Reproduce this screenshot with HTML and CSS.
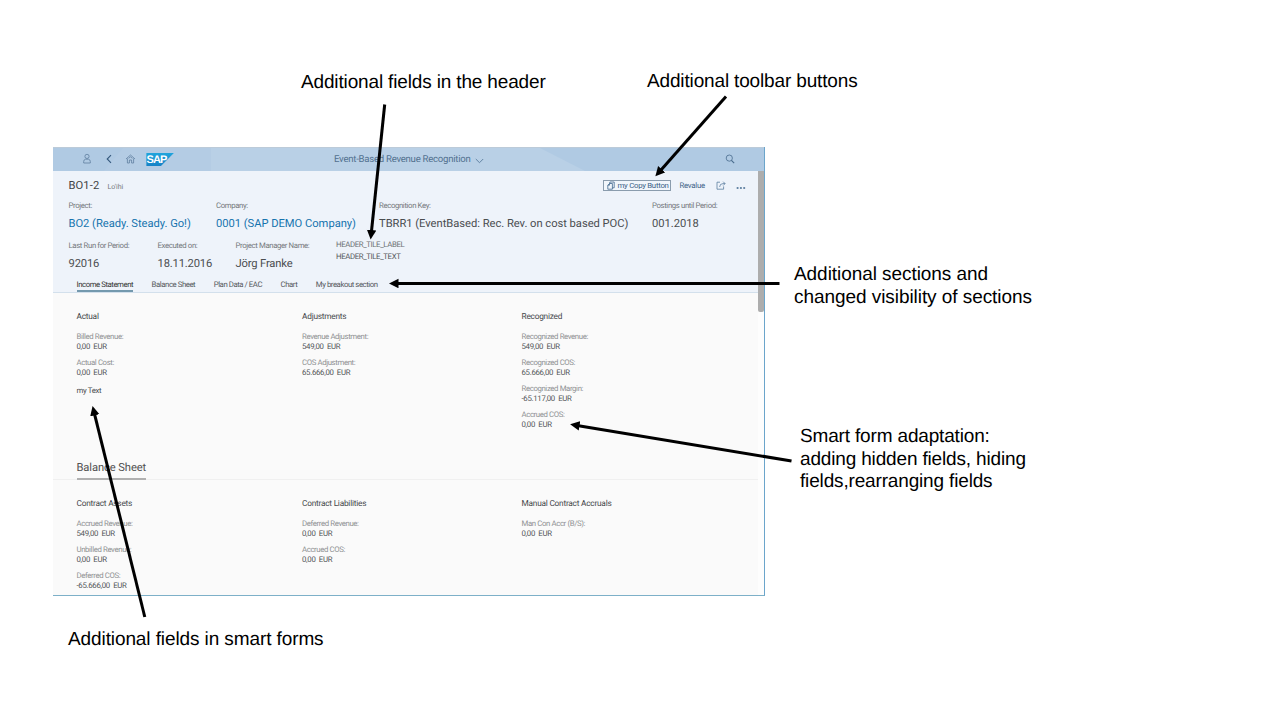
FILE: index.html
```html
<!DOCTYPE html>
<html lang="en">
<head>
<meta charset="utf-8">
<title>Event-Based Revenue Recognition</title>
<link rel="stylesheet" href="styles.css">
</head>
<body>
<main class="slide">
  <section class="app">
    <header class="shell">
      <svg class="shell-bg" width="712" height="24" viewBox="0 0 712 24"><path d="M70 0H470L534 24H50Z" fill="#b4cce4"/><path d="M158 0H487L534 24H158Z" fill="#b9d0e6"/></svg>
      <div class="shell-left">
        <svg width="10" height="12" viewBox="0 0 10 12" fill="none" stroke="#5f7f9f" stroke-width=".8"><circle cx="5" cy="3.4" r="2.1"/><path d="M1.7 10V8.4Q1.7 6.6 3.6 6.2H6.4Q8.3 6.6 8.3 8.4V10Z"/></svg>
        <svg width="10" height="12" viewBox="0 0 10 12" fill="none" stroke="#34597d" stroke-width="1.1"><path d="M7 2.2L3.2 6L7 9.8"/></svg>
        <svg width="11" height="12" viewBox="0 0 11 12" fill="none" stroke="#5f7f9f" stroke-width=".8"><path d="M1 6L5.5 2L10 6M2.4 5.6V10H4.4V7H6.6V10H8.6V5.6M3.6 5.4L5.5 3.8L7.4 5.4"/></svg>
        <div class="logo"><span>SAP</span></div>
      </div>
      <div class="shell-title"><span>Event-Based Revenue Recognition</span>
        <svg width="9" height="6" viewBox="0 0 9 6" fill="none" stroke="#587b9c" stroke-width=".9"><path d="M.8 1L4.5 4.7L8.2 1"/></svg>
      </div>
      <svg class="search" width="10" height="10" viewBox="0 0 10 10" fill="none" stroke="#486b8d" stroke-width=".8"><circle cx="4.3" cy="4.1" r="3.1"/><path d="M6.4 6.4L9.2 9.2" stroke-width="1.1"/></svg>
    </header>
    <div class="body">
      <div class="page">
        <div class="head">
          <div class="title-row">
            <h1>BO1-2</h1><span class="sub">Lo'ihi</span>
            <div class="tools">
              <button class="copy">
                <svg width="8" height="9" viewBox="0 0 8 9" fill="none" stroke="#41688e" stroke-width=".8"><path d="M2.8 1H7.2V6.8H5.4M2.8 1V2.5M.8 4.2L2.5 2.5H5.4V8.2H.8ZM.8 4.2H2.5V2.5"/></svg>
                <span>my Copy Button</span></button>
              <span class="revalue">Revalue</span>
              <svg class="share" width="10" height="9" viewBox="0 0 10 9" fill="none" stroke="#5c7e9f" stroke-width=".8"><path d="M4 1.2H1V8.2H7.6V5.4M3.6 6Q3.8 2.6 7 2.6H9M7.2 .7L9.1 2.6L7.2 4.5"/></svg>
              <svg class="more" width="10" height="4" viewBox="0 0 10 4" fill="#5c7e9f"><circle cx="1.6" cy="2" r="1.1"/><circle cx="4.9" cy="2" r="1.1"/><circle cx="8.2" cy="2" r="1.1"/></svg>
            </div>
          </div>
          <div class="facets facets-a">
            <div><label>Project:</label><a>BO2 (Ready. Steady. Go!)</a></div>
            <div><label>Company:</label><a>0001 (SAP DEMO Company)</a></div>
            <div><label>Recognition Key:</label><b>TBRR1 (EventBased: Rec. Rev. on cost based POC)</b></div>
            <div><label>Postings until Period:</label><b>001.2018</b></div>
          </div>
          <div class="facets facets-b">
            <div><label>Last Run for Period:</label><b>92016</b></div>
            <div><label>Executed on:</label><b>18.11.2016</b></div>
            <div><label>Project Manager Name:</label><b>Jörg Franke</b></div>
            <div class="tile"><span>HEADER_TILE_LABEL</span><span class="dark">HEADER_TILE_TEXT</span></div>
          </div>
          <nav class="tabs">
            <span class="on">Income Statement</span><span>Balance Sheet</span><span>Plan Data / EAC</span><span>Chart</span><span>My breakout section</span>
          </nav>
        </div>
        <div class="forms forms-a">
          <div class="col"><h3>Actual</h3>
            <dl><dt>Billed Revenue:</dt><dd>0,00&nbsp; EUR</dd></dl>
            <dl><dt>Actual Cost:</dt><dd>0,00&nbsp; EUR</dd></dl>
            <p>my Text</p></div>
          <div class="col"><h3>Adjustments</h3>
            <dl><dt>Revenue Adjustment:</dt><dd>549,00&nbsp; EUR</dd></dl>
            <dl><dt>COS Adjustment:</dt><dd>65.666,00&nbsp; EUR</dd></dl></div>
          <div class="col"><h3>Recognized</h3>
            <dl><dt>Recognized Revenue:</dt><dd>549,00&nbsp; EUR</dd></dl>
            <dl><dt>Recognized COS:</dt><dd>65.666,00&nbsp; EUR</dd></dl>
            <dl><dt>Recognized Margin:</dt><dd>-65.117,00&nbsp; EUR</dd></dl>
            <dl><dt>Accrued COS:</dt><dd>0,00&nbsp; EUR</dd></dl></div>
        </div>
        <div class="section"><h2>Balance Sheet</h2></div>
        <div class="forms forms-b">
          <div class="col"><h3>Contract Assets</h3>
            <dl><dt>Accrued Revenue:</dt><dd>549,00&nbsp; EUR</dd></dl>
            <dl><dt>Unbilled Revenue:</dt><dd>0,00&nbsp; EUR</dd></dl>
            <dl><dt>Deferred COS:</dt><dd>-65.666,00&nbsp; EUR</dd></dl></div>
          <div class="col"><h3>Contract Liabilities</h3>
            <dl><dt>Deferred Revenue:</dt><dd>0,00&nbsp; EUR</dd></dl>
            <dl><dt>Accrued COS:</dt><dd>0,00&nbsp; EUR</dd></dl></div>
          <div class="col"><h3>Manual Contract Accruals</h3>
            <dl><dt>Man Con Accr (B/S):</dt><dd>0,00&nbsp; EUR</dd></dl></div>
        </div>
      </div>
      <div class="scroll"><div class="thumb"></div></div>
    </div>
  </section>

  <svg class="arrows" width="1280" height="720" viewBox="0 0 1280 720">
    <defs><marker id="tip" markerUnits="userSpaceOnUse" markerWidth="10" markerHeight="10" refX="1" refY="4.75" orient="auto"><path d="M0 0L9.5 4.75L0 9.5Z"/></marker></defs>
    <g stroke="#000" stroke-width="3">
      <path d="M384.7 104.5L371.5 231" marker-end="url(#tip)"/>
      <path d="M726 96.5L661 170" marker-end="url(#tip)"/>
      <path d="M779.5 283.5H397.5" marker-end="url(#tip)"/>
      <path d="M791.5 461L578.5 425.7" marker-end="url(#tip)"/>
      <path d="M144.8 617L94.6 414.3" marker-end="url(#tip)"/>
    </g>
  </svg>
  <p class="note n1">Additional fields in the header</p>
  <p class="note n2">Additional toolbar buttons</p>
  <p class="note n3">Additional sections and<br>changed visibility of sections</p>
  <p class="note n4">Smart form adaptation:<br>adding hidden fields, hiding<br>fields,rearranging fields</p>
  <p class="note n5">Additional fields in smart forms</p>
</main>
</body>
</html>
```
FILE: styles.css
```css
* { box-sizing: border-box; margin: 0; padding: 0; }
body { background: #fff; }
svg { display: block; flex: none; }
.slide { position: relative; width: 1280px; height: 720px; padding: 147px 0 0 53px; overflow: hidden; font-family: Roboto, "Noto Sans", sans-serif; color: #4a4d50; white-space: nowrap; text-rendering: geometricPrecision; }
.app { width: 712px; height: 449px; border-right: 1px solid #6ba5cb; border-bottom: 1px solid #7db0c8; display: flex; flex-direction: column; }

.shell { position: relative; height: 24px; flex: none; background: #b0cae3; border-top: 1px solid #bccbd9; display: flex; align-items: center; overflow: hidden; }
.shell-bg { position: absolute; left: 0; top: 0; }
.shell-left { position: relative; width: 281px; padding-left: 29.4px; display: flex; align-items: center; gap: 12px; }
.shell-left svg { margin-bottom: 1px; }
.shell-left svg:nth-child(3) { margin-left: -1px; }
.logo { width: 27.5px; height: 13px; margin-left: -2px; background: linear-gradient(#1fa4dc, #1783c6); clip-path: polygon(0 0, 100% 0, 53% 100%, 0 100%); color: #fff; font: bold 11px/14px "Liberation Sans", Arial, sans-serif; letter-spacing: -.8px; }
.shell-title { position: relative; flex: 1; display: flex; align-items: center; gap: 5px; font-size: 9.6px; letter-spacing: -.26px; color: #52718f; }
.shell-title svg { margin-top: 3px; }
.search { position: relative; margin-right: 29.5px; margin-bottom: 1px; }

.body { flex: 1; display: flex; min-height: 0; }
.page { width: 705px; background: #fafafa; }
.scroll { flex: 1; background: #fdfdfd; }
.thumb { height: 141px; background: #adadad; border-radius: 0 0 2px 2px; }

.head { height: 122px; background: #eef3fa; border-bottom: 1px solid #d3e0ec; padding-left: 15.5px; display: flex; flex-direction: column; }
.title-row { height: 29px; flex: none; display: flex; align-items: center; }
h1 { font-size: 11.2px; font-weight: 400; color: #3f4245; width: 39px; letter-spacing: .1px; }
.sub { font-size: 7px; color: #74787c; padding-top: 3px; }
.tools { margin-left: auto; padding-right: 12.5px; display: flex; align-items: center; color: #3d6388; font-size: 7.8px; letter-spacing: -.27px; }
.copy { width: 68px; height: 11px; border: 1px solid #8a9cad; background: #f1f6fb; display: flex; align-items: center; gap: 3px; padding-left: 3px; font: inherit; letter-spacing: inherit; color: inherit; }
.revalue { margin-left: 9px; width: 36px; }
.share { margin-right: 10px; }
.more { margin-top: 5px; }

.facets { display: grid; flex: none; height: 39px; }
.facets label { display: block; height: 12px; line-height: 12px; font-size: 7.8px; letter-spacing: -.38px; color: #75797d; }
.facets a, .facets b { display: block; height: 24px; line-height: 24px; font-size: 11.2px; font-weight: 400; }
.facets a { color: #1673ae; }
.facets-a { grid-template-columns: 147.5px 163px 273px auto; letter-spacing: -.03px; }
.facets-b { grid-template-columns: 89px 78px 100.5px auto; padding-top: 1px; letter-spacing: -.16px; }
.tile { display: flex; flex-direction: column; font-size: 7.8px; letter-spacing: -.38px; line-height: 12px; color: #6c7074; margin-top: -1px; }
.tile .dark { color: #55595d; }
.tabs { height: 14px; flex: none; display: flex; padding-left: 8px; gap: 18.5px; font-size: 7.8px; letter-spacing: -.45px; line-height: 13px; color: #55595d; }
.tabs .on { color: #333; border-bottom: 2px solid #7499ae; }

.forms { display: grid; grid-template-columns: 225.5px 219.5px auto; padding-left: 23.5px; }
.forms-a { height: 163px; padding-top: 16px; }
.forms-b { padding-top: 16px; }
h3 { height: 16px; line-height: 16px; font-size: 8.3px; letter-spacing: -.23px; font-weight: 400; color: #46494c; margin-bottom: 7px; }
dl { margin-bottom: 6px; font-size: 7.8px; letter-spacing: -.38px; line-height: 10px; }
dt { color: #8f9193; }
dd { color: #505356; letter-spacing: -.3px; }
.col p { font-size: 7.8px; letter-spacing: -.35px; line-height: 12px; padding-top: 1px; }
.section { height: 24px; border-bottom: 1px solid #f0f0f0; padding-left: 23.5px; display: flex; }
h2 { font-size: 11.2px; letter-spacing: -.1px; line-height: 24px; font-weight: 400; color: #515151; border-bottom: 2px solid #b0b0b0; height: 24px; }

.arrows { position: absolute; left: 0; top: 0; }
.note { position: absolute; font: 19px/23px "Liberation Sans", Arial, sans-serif; letter-spacing: -.12px; color: #000; }
.n1 { left: 301px; top: 71px; letter-spacing: -.15px; }
.n2 { left: 647px; top: 70px; letter-spacing: -.15px; }
.n3 { left: 794px; top: 263px; letter-spacing: -.06px; }
.n4 { left: 800px; top: 426px; line-height: 22.7px; letter-spacing: -.16px; }
.n5 { left: 68px; top: 628px; letter-spacing: -.1px; }
```
